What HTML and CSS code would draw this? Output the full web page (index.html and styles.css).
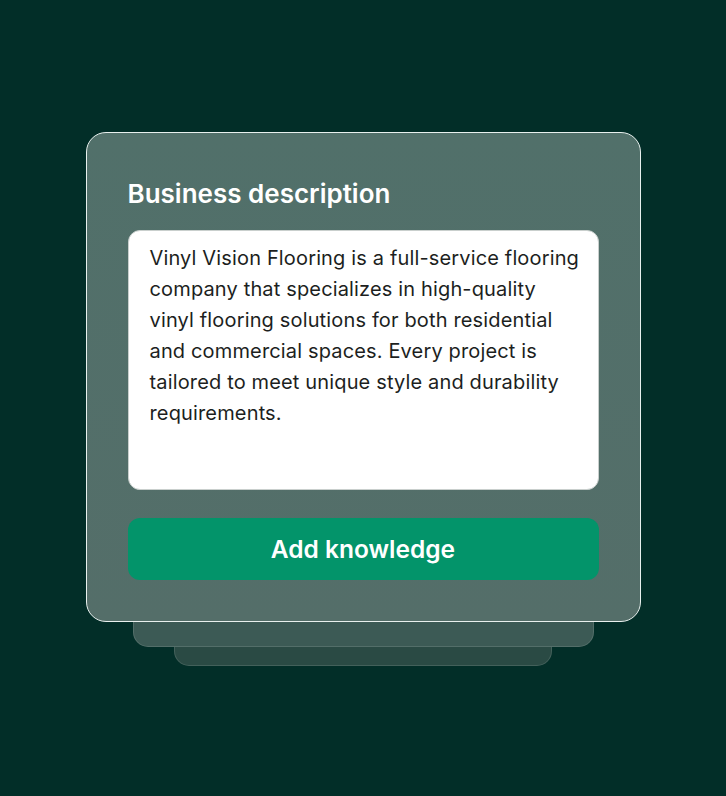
FILE: index.html
```html
<!DOCTYPE html>
<html>
<head>
<meta charset="utf-8">
<link rel="stylesheet" href="styles.css">
</head>
<body>
<div class="stage">
  <div class="card">
    <h2 class="title">Business description</h2>
    <div class="field">Vinyl Vision Flooring is a full-service flooring company that specializes in high-quality vinyl flooring solutions for both residential and commercial spaces. Every project is tailored to meet unique style and durability requirements.</div>
    <button class="btn">Add knowledge</button>
  </div>
  <div class="layer layer-1"></div>
  <div class="layer layer-2"></div>
</div>
</body>
</html>
```
FILE: styles.css
```css
html, body {
  margin: 0;
  padding: 0;
}
body {
  width: 726px;
  height: 796px;
  background: #022e28;
  font-family: Inter, "Noto Sans", sans-serif;
  overflow: hidden;
}
.stage {
  display: flex;
  flex-direction: column;
  align-items: center;
  padding-top: 132px;
}
.card {
  position: relative;
  z-index: 2;
  box-sizing: border-box;
  width: 555px;
  height: 490px;
  padding: 40px 41px 0 41px;
  border: 1.5px solid #e8f0ee;
  border-radius: 20px;
  background: linear-gradient(180deg, #51706a 0%, #546e69 100%);
  display: flex;
  flex-direction: column;
}
.title {
  margin: 0;
  font-size: 26px;
  font-weight: 600;
  line-height: 42px;
  color: #ffffff;
}
.field {
  margin-top: 15px;
  box-sizing: border-box;
  height: 260px;
  padding: 12px 14px 0 21px;
  background: #ffffff;
  border: 1.5px solid #c9cfcd;
  border-radius: 12px;
  color: #1d1f1e;
  font-size: 20px;
  line-height: 31px;
  letter-spacing: 0.15px;
}
.btn {
  margin-top: 28px;
  height: 62px;
  border: none;
  border-radius: 12px;
  background: #03946a;
  color: #ffffff;
  font-family: Inter, "Noto Sans", sans-serif;
  font-size: 24.5px;
  font-weight: 600;
  padding: 0;
}
.layer {
  box-sizing: border-box;
  border: 1px solid rgba(255, 255, 255, 0.12);
  border-top: none;
  border-radius: 0 0 15px 15px;
}
.layer-1 {
  position: relative;
  z-index: 1;
  width: 461px;
  height: 25px;
  background: #3c5a55;
}
.layer-2 {
  width: 378px;
  height: 19px;
  background: #2a4a44;
}
```
